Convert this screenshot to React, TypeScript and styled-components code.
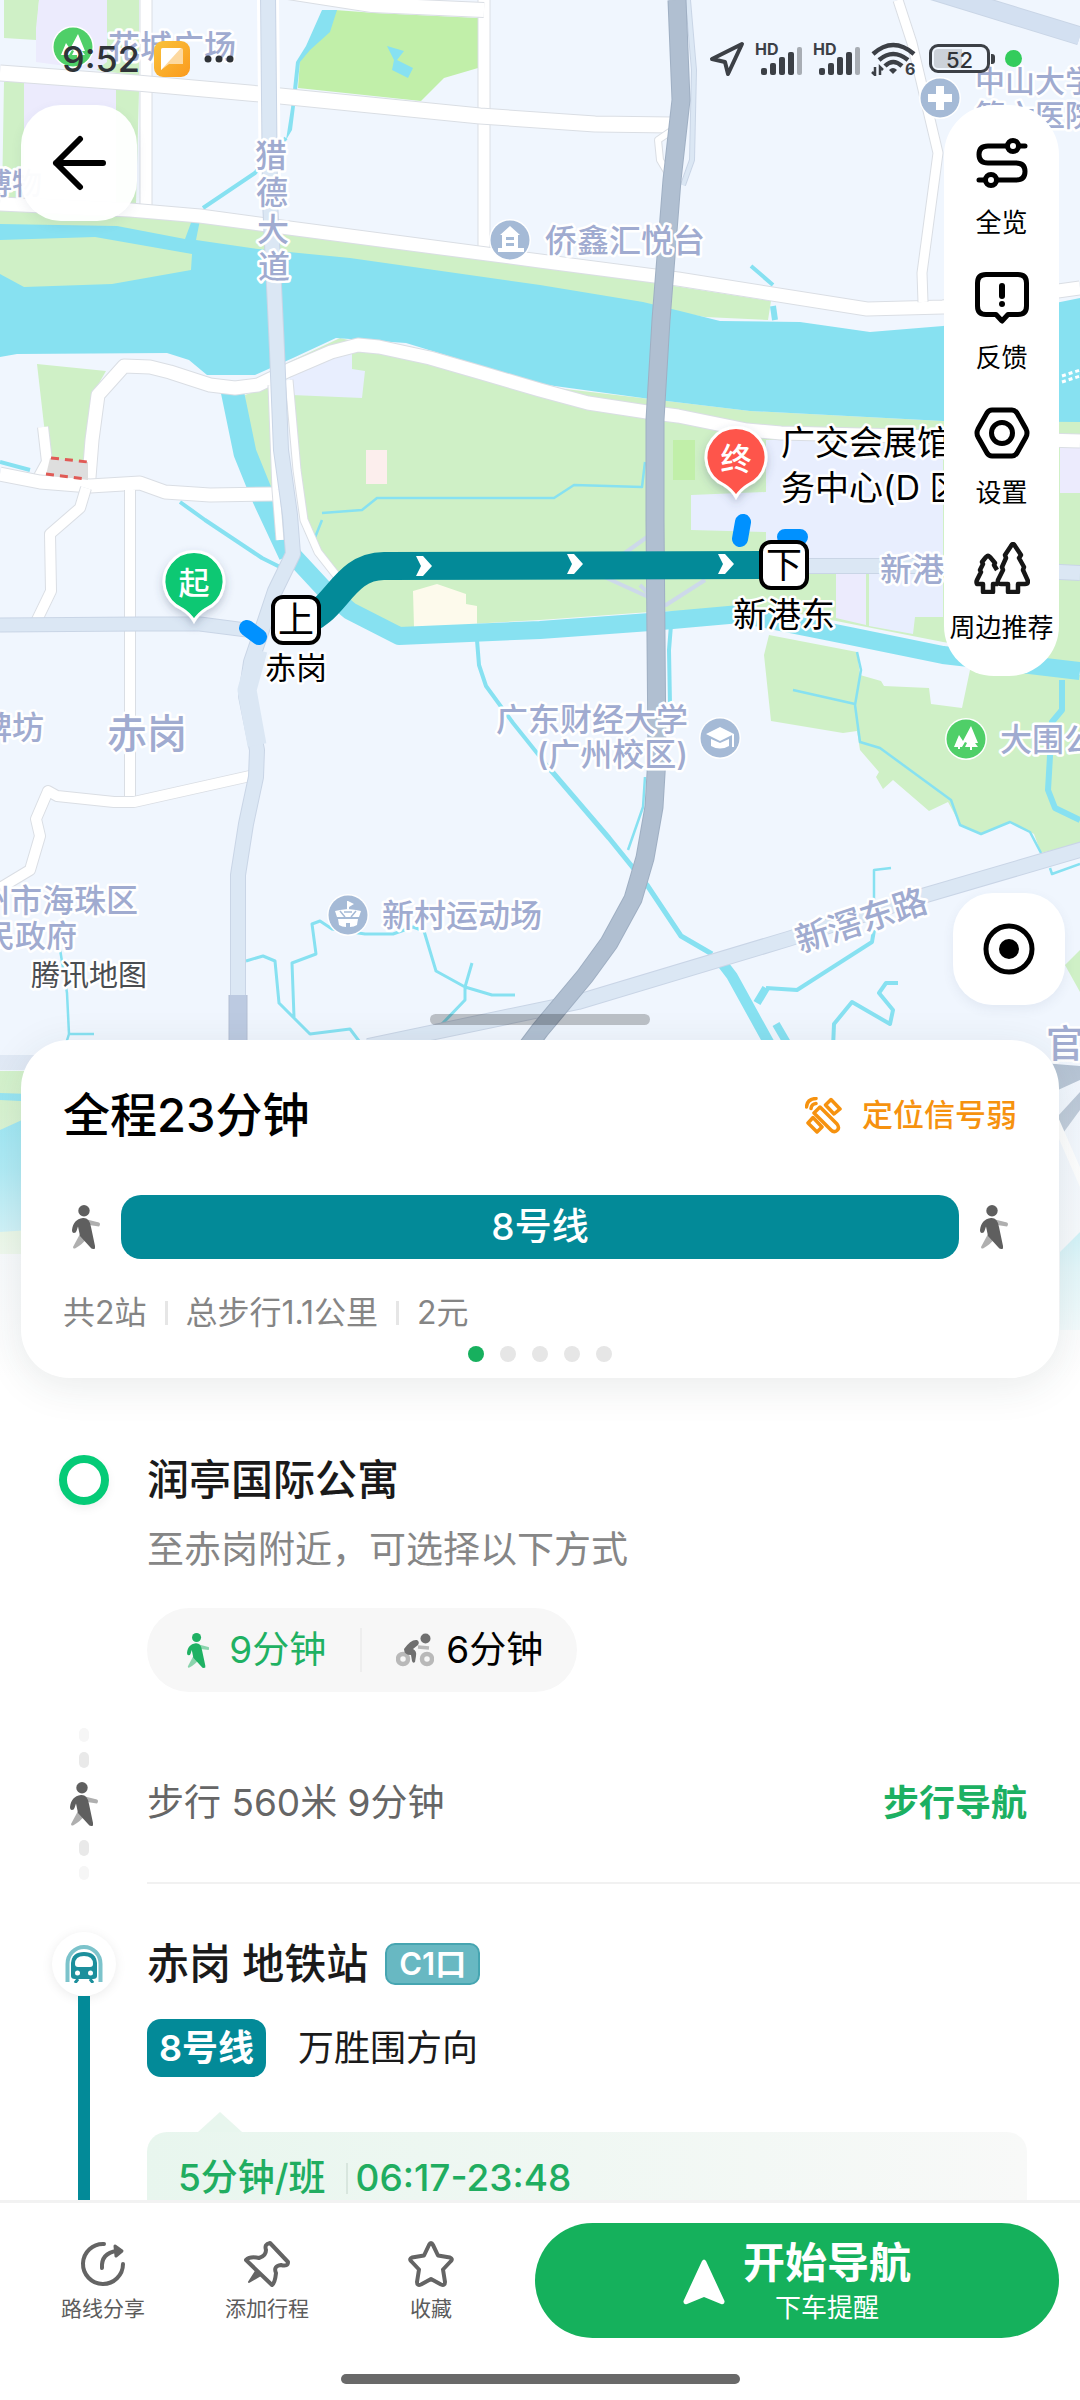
import React from "react";
import styled, { createGlobalStyle } from "styled-components";

const c = {
  land: "#f0f6fe",
  park: "#cff0c6",
  lawn: "#c1efa9",
  water: "#87e1f1",
  lilac: "#e8eefe",
  violet: "#ecebfd",
  avenue: "#dbe7f4",
  avenueEdge: "#c9d5e6",
  highway: "#b0bfd1",
  label: "#a0abd0",
  line: "#038a98",
  green: "#15b15c",
  ink: "#1a1a1a",
};

const Global = createGlobalStyle`
  *, *::before, *::after { box-sizing: border-box; }
  body {
    margin: 0;
    background: #fff;
    color: ${c.ink};
    font-family: Inter, "Noto Sans CJK SC", sans-serif;
  }
  button { font: inherit; color: inherit; border: 0; padding: 0; background: none; cursor: pointer; }
  h1, h2, p, ul, ol { margin: 0; padding: 0; font-weight: inherit; }
  ul, ol { list-style: none; }
  svg { display: block; flex: none; }
`;

const Screen = styled.div`
  height: 100vh;
  display: flex;
  flex-direction: column;
  overflow: hidden;
`;

const Content = styled.main`
  flex: 1;
  min-height: 0;
  display: flex;
  flex-direction: column;
  overflow-y: auto;
  scrollbar-width: none;
`;

/* ---------- map stage ---------- */

const Stage = styled.section`
  position: relative;
  flex: none;
  display: flex;
  flex-direction: column;
  padding-bottom: 30px;
`;

const MapCanvas = styled.svg`
  position: absolute;
  inset: 0;
  width: 100%;
  height: 100%;
`;

const Fade = styled.div`
  position: absolute;
  inset: auto 0 0;
  height: 370px;
  background: linear-gradient(
    rgba(255, 255, 255, 0) 0,
    rgba(250, 251, 251, 0.35) 35%,
    rgba(250, 251, 251, 0.8) 62%,
    #fff 92%
  );
`;

const MapLabel = styled.text<{ $size?: number; $tone?: string }>`
  font-size: ${(p) => p.$size ?? 32}px;
  font-weight: ${(p) => (p.$tone ? 400 : 500)};
  fill: ${(p) => p.$tone ?? c.label};
  stroke: #fff;
  stroke-width: 5px;
  stroke-linejoin: round;
  paint-order: stroke;
  dominant-baseline: central;
`;

const PinText = styled.text`
  font-size: 31px;
  font-weight: 500;
  fill: #fff;
  text-anchor: middle;
  dominant-baseline: central;
`;

const StopText = styled.text`
  font-size: 36px;
  fill: #000;
  text-anchor: middle;
  dominant-baseline: central;
`;

const StatusBar = styled.header`
  position: relative;
  height: 105px;
  padding: 12px 58px 0 62px;
  display: flex;
  align-items: center;
  justify-content: space-between;
  color: #2f3338;
`;

const StatusGroup = styled.div<{ $gap: number }>`
  display: flex;
  align-items: center;
  gap: ${(p) => p.$gap}px;
`;

const Clock = styled.time`
  font-size: 36px;
  line-height: 36px;
  font-weight: 500;
`;

const Battery = styled.span`
  width: 61px;
  height: 29px;
  margin-left: 3px;
  border: 3px solid #3c4046;
  border-radius: 9px;
  display: grid;
  place-items: center;
  font-size: 22px;
  line-height: 22px;
  font-weight: 500;
  background: linear-gradient(90deg, rgba(60, 64, 70, 0.2) 55%, transparent 55%);
  background-clip: content-box;
  padding: 2px;
`;

const BatteryNub = styled.span`
  width: 4px;
  height: 10px;
  margin-left: -6px;
  border-radius: 0 3px 3px 0;
  background: #3c4046;
`;

const LiveDot = styled.span`
  width: 17px;
  height: 17px;
  border-radius: 50%;
  background: #33cc5c;
`;

const Controls = styled.div`
  position: relative;
  display: flex;
  justify-content: space-between;
  align-items: flex-start;
  padding: 0 15px 0 21px;
`;

const FloatButton = styled.button<{ $size: number }>`
  width: ${(p) => p.$size}px;
  height: ${(p) => p.$size}px;
  border-radius: 40px;
  display: grid;
  place-items: center;
  background: rgba(255, 255, 255, 0.96);
  box-shadow: 0 4px 12px rgba(60, 80, 110, 0.08);
`;

const SideColumn = styled.div`
  display: flex;
  flex-direction: column;
  align-items: flex-end;
  gap: 217px;
`;

const ToolPanel = styled.nav`
  width: 115px;
  margin-right: 6px;
  padding: 32px 0 33px;
  display: flex;
  flex-direction: column;
  gap: 34px;
  border-radius: 50px;
  background: #fff;
`;

const Tool = styled.button`
  display: flex;
  flex-direction: column;
  align-items: center;
  gap: 19px;
  font-size: 26px;
  line-height: 30px;
  color: #000;
  white-space: nowrap;
`;

const DragHandle = styled.div`
  position: relative;
  width: 220px;
  height: 11px;
  margin: 9px auto 15px;
  border-radius: 6px;
  background: rgba(0, 0, 0, 0.22);
`;

/* ---------- summary card ---------- */

const Card = styled.article`
  position: relative;
  margin: 0 21px;
  padding: 45px 42px 16px;
  border-radius: 48px;
  background: #fff;
  box-shadow: 0 8px 40px rgba(40, 60, 60, 0.1);
`;

const CardHead = styled.div`
  display: flex;
  align-items: center;
  justify-content: space-between;
`;

const Total = styled.h1`
  font-size: 47px;
  line-height: 60px;
  font-weight: 500;
  color: #000;
`;

const Signal = styled.p`
  display: flex;
  align-items: center;
  gap: 20px;
  font-size: 31px;
  line-height: 40px;
  font-weight: 500;
  color: #f6920f;
`;

const RouteBar = styled.div`
  display: flex;
  align-items: center;
  gap: 12px;
  margin: 50px 0 34px;
`;

const WalkSlot = styled.span`
  width: 46px;
  display: flex;
  justify-content: center;
`;

const LineBar = styled.div`
  flex: 1;
  border-radius: 20px;
  background: ${c.line};
  color: #fff;
  font-size: 37px;
  line-height: 64px;
  font-weight: 500;
  text-align: center;
`;

const Facts = styled.ul`
  display: flex;
  align-items: center;
  font-size: 32px;
  line-height: 40px;
  color: #858585;
`;

const Fact = styled.li`
  display: flex;
  align-items: center;
  & + &::before {
    content: "";
    width: 3px;
    height: 24px;
    margin: 0 18px;
    background: #e6e6e6;
  }
`;

const Pager = styled.div`
  display: flex;
  justify-content: center;
  gap: 16px;
  margin-top: 13px;
`;

const PageDot = styled.button<{ $active?: boolean }>`
  width: 16px;
  height: 16px;
  border-radius: 50%;
  background: ${(p) => (p.$active ? "#17b05e" : "#e6e6e6")};
`;

/* ---------- steps ---------- */

const Steps = styled.ol`
  flex: 1;
  display: flex;
  flex-direction: column;
`;

const Step = styled.li`
  display: grid;
  grid-template-columns: 147px minmax(0, 1fr);
`;

const Gutter = styled.div<{ $top?: number; $gap?: number; $center?: boolean }>`
  display: flex;
  flex-direction: column;
  align-items: center;
  justify-content: ${(p) => (p.$center ? "center" : "flex-start")};
  gap: ${(p) => p.$gap ?? 0}px;
  padding: ${(p) => p.$top ?? 0}px 0 0 21px;
`;

const StartBody = styled.div`
  padding: 44px 53px 32px 0;
`;

const PlaceName = styled.h2`
  font-size: 42px;
  line-height: 56px;
  font-weight: 500;
  color: ${c.ink};
`;

const Hint = styled.p`
  margin: 17px 0 33px;
  font-size: 37px;
  line-height: 50px;
  color: #868686;
`;

const StartRing = styled.span`
  width: 50px;
  height: 50px;
  border: 8px solid #05cb77;
  border-radius: 50%;
  box-shadow: 0 4px 10px rgba(0, 0, 0, 0.06);
`;

const ModeSwitch = styled.div`
  width: fit-content;
  height: 84px;
  padding: 0 34px 0 40px;
  display: flex;
  align-items: center;
  border-radius: 42px;
  background: #f7f7f7;
`;

const Mode = styled.button<{ $active?: boolean }>`
  display: flex;
  align-items: center;
  gap: ${(p) => (p.$active ? 20 : 12)}px;
  font-size: 37px;
  line-height: 50px;
  color: ${(p) => (p.$active ? "#1fb163" : "#000")};
`;

const ModeDivider = styled.span`
  width: 2px;
  height: 44px;
  margin: 0 34px;
  background: #eeeeee;
`;

const Bead = styled.span<{ $faint?: boolean }>`
  width: 10px;
  height: ${(p) => (p.$faint ? 14 : 16)}px;
  border-radius: 5px;
  background: ${(p) => (p.$faint ? "#f6f6f6" : "#e9e9e9")};
`;

const BeadPair = styled.span`
  display: flex;
  flex-direction: column;
  gap: 10px;
`;

const WalkBody = styled.div`
  height: 160px;
  padding-right: 53px;
  display: flex;
  align-items: center;
  justify-content: space-between;
  border-bottom: 2px solid #f1f1f1;
  font-size: 37px;
  line-height: 50px;
  color: #666;
`;

const WalkLink = styled.a`
  font-weight: 600;
  font-size: 36px;
  color: #1cb062;
  text-decoration: none;
`;

const StationDisc = styled.span`
  width: 64px;
  height: 64px;
  flex: none;
  display: grid;
  place-items: center;
  border-radius: 50%;
  background: #fff;
  box-shadow: 0 2px 12px rgba(0, 0, 0, 0.08);
`;

const LineTrack = styled.span`
  flex: 1;
  width: 12px;
  background: ${c.line};
`;

const StationBody = styled.div`
  padding: 52px 53px 0 0;
`;

const StationHead = styled.div`
  display: flex;
  align-items: center;
  gap: 17px;
`;

const ExitTag = styled.span`
  height: 42px;
  padding: 0 12px;
  border: 2px solid #46a5b1;
  border-radius: 10px;
  background: #68b8c2;
  color: #fff;
  font-size: 31px;
  line-height: 38px;
  font-weight: 600;
`;

const Direction = styled.div`
  display: flex;
  align-items: center;
  gap: 32px;
  margin: 27px 0 55px;
  font-size: 36px;
  line-height: 58px;
`;

const LineTag = styled.span`
  padding: 0 12px;
  border-radius: 14px;
  background: ${c.line};
  color: #fff;
  font-weight: 600;
`;

const Timetable = styled.div`
  position: relative;
  padding: 22px 31px 40px;
  display: flex;
  align-items: center;
  border-radius: 20px 20px 0 0;
  background: linear-gradient(90deg, #e8f6ee, #f8f9f8);
  color: #20ad60;
  font-size: 37px;
  line-height: 48px;
  font-weight: 500;
  &::before {
    content: "";
    position: absolute;
    left: 51px;
    bottom: 100%;
    border: solid transparent;
    border-width: 0 22px 20px;
    border-bottom-color: #e8f6ee;
  }
`;

const TimeDivider = styled.span`
  width: 2px;
  height: 31px;
  margin: 0 8px 0 20px;
  background: #d8e6de;
`;

/* ---------- footer ---------- */

const Footer = styled.footer`
  flex: none;
  padding: 20px 21px 16px;
  border-top: 3px solid #f2f2f2;
  background: #fff;
`;

const FooterRow = styled.div`
  display: grid;
  grid-template-columns: 164fr 164fr 164fr 546fr;
  align-items: center;
`;

const Action = styled.button`
  display: flex;
  flex-direction: column;
  align-items: center;
  gap: 8px;
  padding-top: 3px;
  font-size: 21px;
  line-height: 28px;
  color: #5c5c5c;
`;

const StartButton = styled.button`
  height: 115px;
  margin-left: 22px;
  padding-top: 3px;
  display: flex;
  align-items: center;
  justify-content: center;
  gap: 18px;
  border-radius: 58px;
  background: ${c.green};
  color: #fff;
`;

const StartText = styled.span`
  display: flex;
  flex-direction: column;
  align-items: center;
  gap: 4px;
`;

const StartMain = styled.span`
  font-size: 42px;
  line-height: 48px;
  font-weight: 600;
`;

const StartSub = styled.span`
  font-size: 26px;
  line-height: 34px;
`;

const HomeBar = styled.div`
  width: 399px;
  height: 10px;
  margin: 36px auto 0;
  border-radius: 5px;
  background: #696969;
`;

/* ---------- drawings ---------- */

const Walker = ({ tone = "#5f5f5f", height = 44 }: { tone?: string; height?: number }) => (
  <svg height={height} viewBox="0 0 28 44" fill={tone} aria-hidden="true">
    <path opacity=".5" d="M15 14.5L27 17.5Q29 19 27 21.5L17 20Z" />
    <path opacity=".5" d="M8 29L1 42Q1 44 3 43.500Q11 39 15 33Z" />
    <circle cx="12" cy="5.700" r="5.700" />
    <path d="M11 13C4 14 1 18 0 25Q0 28 2 28Q4 28 4.500 26L6 21.500L8 31L18 42Q20 45 23 43.500L23 41L19 22Q17.500 12.500 11 13Z" />
  </svg>
);

const Cyclist = () => (
  <svg width="38" height="34" viewBox="0 0 38 34" aria-hidden="true">
    <g fill="none" stroke="#b9b9b9" strokeWidth="4.500">
      <circle cx="7" cy="26" r="5" />
      <circle cx="31" cy="26" r="5" />
      <path d="M22 14L33 15" strokeWidth="3.500" />
    </g>
    <circle cx="29.500" cy="5.500" r="5" fill="#6f6f6f" />
    <path fill="#6f6f6f" d="M8 16Q15 6 21 7Q24 9 22 12L17 16Q21 18 20 23L19 29Q17 31 16 28L15 22Q8 22 8 16Z" />
  </svg>
);

const Satellite = () => (
  <svg width="37" height="37" viewBox="0 0 37 37" fill="none" stroke="#f6920f" strokeWidth="3.500" strokeLinejoin="round" aria-hidden="true">
    <path d="M1.500 10Q2 2 11 1.500M6 11.500Q6.500 7 11 6.500" strokeLinecap="round" />
    <path d="M15 9L32 26Q35 30 32 32.500Q29 35 26 32L9 15Z" transform="translate(0 1)" />
    <path d="M26 2.500L35 12L29 17L20.500 8Z" />
    <path d="M8 20.500L17 30L12 35L3 26Z" />
  </svg>
);

const BackArrow = () => (
  <svg width="56" height="56" viewBox="0 0 56 56" fill="none" stroke="#000" strokeWidth="6" strokeLinecap="round" strokeLinejoin="round" aria-hidden="true">
    <path d="M29 4L5 28L29 52M5 28H52" />
  </svg>
);

const OverviewIcon = () => (
  <svg width="52" height="52" viewBox="0 0 52 52" fill="none" stroke="#000" strokeWidth="5" strokeLinecap="round" aria-hidden="true">
    <path d="M49 9H43M31 9H12Q3 9 3 17.500T12 26H40Q49 26 49 34.500T40 43H22M9 43H3" />
    <circle cx="37" cy="9" r="5.500" />
    <circle cx="15" cy="43" r="5.500" />
  </svg>
);

const FeedbackIcon = () => (
  <svg width="54" height="52" viewBox="0 0 54 52" fill="none" stroke="#000" strokeWidth="5" strokeLinejoin="round" aria-hidden="true">
    <path d="M11 2.500H43Q51.500 2.500 51.500 11V34Q51.500 42.500 43 42.500H33L27 49L21 42.500H11Q2.500 42.500 2.500 34V11Q2.500 2.500 11 2.500Z" />
    <path d="M27 14V24" strokeWidth="6" strokeLinecap="round" />
    <circle cx="27" cy="32" r="3" fill="#000" stroke="none" />
  </svg>
);

const SettingsIcon = () => (
  <svg width="56" height="52" viewBox="0 0 56 52" fill="none" stroke="#000" strokeWidth="5" strokeLinejoin="round" aria-hidden="true">
    <path d="M18 3H38Q41 3 43 6L52 22Q54 26 52 30L43 46Q41 49 38 49H18Q15 49 13 46L4 30Q2 26 4 22L13 6Q15 3 18 3Z" />
    <circle cx="28" cy="26" r="10.500" />
  </svg>
);

const TreesIcon = () => (
  <svg width="56" height="52" viewBox="0 0 56 52" fill="none" stroke="#161616" strokeWidth="4.500" strokeLinejoin="round" aria-hidden="true">
    <path d="M24 42H19V50H9V42H3Q2 40 3 38L7 30L6 28L9 22L8 20L12 15Q14 13 16 15L21 21L20 23L23 28" />
    <path d="M39 2Q40 2 41 4L47 13L45 16L50 25L49 28L54 39Q54 42 51 42H44V50H34V42H27Q23 42 24 38L29 28L28 25L32 16L31 13L37 4Q38 2 39 2Z" />
  </svg>
);

const LocateIcon = () => (
  <svg width="52" height="52" viewBox="0 0 52 52" aria-hidden="true">
    <circle cx="26" cy="26" r="23" fill="none" stroke="#000" strokeWidth="5" />
    <circle cx="26" cy="26" r="10" />
  </svg>
);

const TrainIcon = () => (
  <svg width="38" height="38" viewBox="0 0 38 38" aria-hidden="true">
    <path d="M2.500 37V19A16.500 17 0 0 1 35.500 19V37" fill="none" stroke="#7cc3cb" strokeWidth="4" />
    <path d="M6 18Q7 7 19 7T32 18V31Q32 34 28 34H10Q6 34 6 31Z" fill="#1c8f9c" />
    <path d="M10 19Q10 11 19 11T28 19Q28 22 25 22H13Q10 22 10 19Z" fill="#fff" />
    <circle cx="12.500" cy="28" r="2.500" fill="#fff" />
    <circle cx="25.500" cy="28" r="2.500" fill="#fff" />
    <path d="M10 38L13 34M28 38L25 34" stroke="#1c8f9c" strokeWidth="3" />
  </svg>
);

const ShareIcon = () => (
  <svg width="46" height="46" viewBox="0 0 46 46" fill="none" stroke="#646464" strokeWidth="4" strokeLinecap="round" strokeLinejoin="round" aria-hidden="true">
    <path d="M24 3A20 20 0 1 0 43 23" />
    <path d="M22 27Q21 12 37 10" />
    <path d="M35 5L42 10L36 15Z" fill="#646464" strokeWidth="3" />
  </svg>
);

const PushpinIcon = () => (
  <svg width="46" height="46" viewBox="0 0 46 46" fill="none" stroke="#646464" strokeWidth="4" strokeLinejoin="round" aria-hidden="true">
    <path d="M26 2Q20 3 22 9Q22 15 15 17Q6 15 2 19L28 44Q31 42 32 32Q29 25 37 24Q44 26 44 21Z" />
    <path d="M12 30L5 41L17 34Z" fill="#646464" strokeWidth="2" />
  </svg>
);

const StarIcon = () => (
  <svg width="46" height="46" viewBox="0 0 46 46" fill="none" stroke="#646464" strokeWidth="4" strokeLinejoin="round" aria-hidden="true">
    <path d="M21 4Q23 0 25 4L30 14.500L42 16.500Q45 18 43 20L35 28.500L37 41Q37 45 33 43.500L23 38L13 43.500Q9 45 9 41L11 28.500L3 20Q1 18 4 16.500L16 14.500Z" />
  </svg>
);

const GoArrow = () => (
  <svg width="42" height="46" viewBox="0 0 42 46" fill="#fff" aria-hidden="true">
    <path d="M19 2Q21 -1 23 2L41.500 42Q42 46 38 45L21 38L4 45Q0 46 .500 42Z" />
  </svg>
);

const Cellular = () => (
  <svg width="48" height="33" viewBox="0 0 48 33" fill="#3c4046" aria-hidden="true">
    <text x="0" y="13" fontSize="16" fontWeight="700">HD</text>
    <rect x="6" y="26" width="6" height="7" rx="2" />
    <rect x="15" y="21" width="6" height="12" rx="2" />
    <rect x="24" y="15" width="6" height="18" rx="2" />
    <rect x="33" y="10" width="6" height="23" rx="2" />
    <rect x="42" y="5" width="5" height="28" rx="2" opacity=".4" />
  </svg>
);

const Wifi = () => (
  <svg width="45" height="34" viewBox="0 0 45 34" fill="none" stroke="#3c4046" strokeWidth="4.500" aria-hidden="true">
    <path d="M2 12Q22 -6 43 12M8 18Q22 6 37 18M14 24Q22 16 31 24" />
    <path d="M18 28Q22 24 26 28L22 32Z" fill="#3c4046" stroke="none" />
    <path d="M4 25V33L1 30M9 33V25L12 28" strokeWidth="2.500" />
    <text x="34" y="33" fontSize="16" fontWeight="700" fill="#3c4046" stroke="none">6</text>
  </svg>
);

const NavArrow = () => (
  <svg width="36" height="36" viewBox="0 0 36 36" fill="none" stroke="#3c4046" strokeWidth="4" strokeLinejoin="round" aria-hidden="true">
    <path d="M33 3L3 18L16 21L19 33Z" />
  </svg>
);

const AppBadge = () => (
  <svg width="36" height="36" viewBox="0 0 36 36" aria-hidden="true">
    <defs>
      <linearGradient id="badge" x1="0" y1="0" x2="1" y2="1">
        <stop offset="0" stopColor="#f9c33c" />
        <stop offset="1" stopColor="#fb9a1d" />
      </linearGradient>
    </defs>
    <rect width="36" height="36" rx="9" fill="url(#badge)" />
    <path d="M7 9Q7 7 9 7H27Q29 7 29 9V23H15L7 29Z" fill="#fdd9a0" />
    <path d="M7 9Q7 7 9 7H27L7 29Z" fill="#fff" />
  </svg>
);

const MoreDots = () => (
  <svg width="30" height="8" viewBox="0 0 30 8" fill="#2f3338" aria-hidden="true">
    <circle cx="4" cy="4" r="3.500" />
    <circle cx="15" cy="4" r="3.500" />
    <circle cx="26" cy="4" r="3.500" />
  </svg>
);

/* ---------- map drawing ---------- */

const Street = ({ d, width = 13 }: { d: string; width?: number }) => (
  <>
    <path d={d} stroke="#dadee4" strokeWidth={width + 2} />
    <path d={d} stroke="#fff" strokeWidth={width} />
  </>
);

const Avenue = ({ d, width = 14, tone = c.avenue, edge = c.avenueEdge }: { d: string; width?: number; tone?: string; edge?: string }) => (
  <>
    <path d={d} stroke={edge} strokeWidth={width + 2} />
    <path d={d} stroke={tone} strokeWidth={width} />
  </>
);

const Poi = ({ x, y, park, children }: { x: number; y: number; park?: boolean; children: React.ReactNode }) => (
  <g transform={`translate(${x} ${y})`}>
    <circle r="21" fill="#fff" />
    <circle r="19.500" fill={park ? "#4fcf68" : "#a5bad6"} />
    {children}
  </g>
);

const TreesGlyph = () => (
  <path fill="#fff" d="M5 -13L12 4L9 4L12 8H6V11H4V8H-1L1 4L-1 3L-4 8H-6V10H-8V8H-12L-7 -4L-3 2Z" />
);

const Pin = ({ x, y, tone, text }: { x: number; y: number; tone: string; text: string }) => (
  <g transform={`translate(${x} ${y})`}>
    <path
      d="M0 39Q-4 32 -12 27A30 30 0 1 1 12 27Q4 32 0 39Z"
      fill={tone}
      stroke="#fff"
      strokeWidth="3"
      filter="url(#pinShadow)"
    />
    <PinText>{text}</PinText>
  </g>
);

const Stop = ({ x, y, text }: { x: number; y: number; text: string }) => (
  <g transform={`translate(${x} ${y})`}>
    <rect x="-23" y="-23" width="46" height="46" rx="10" fill="#fff" stroke="#000" strokeWidth="4" />
    <StopText>{text}</StopText>
  </g>
);

const CityMap = () => (
  <MapCanvas viewBox="0 0 1080 1408" preserveAspectRatio="xMidYMin slice" role="img" aria-label="路线地图">
    <defs>
      <filter id="pinShadow" x="-30%" y="-30%" width="160%" height="170%">
        <feDropShadow dx="0" dy="4" stdDeviation="4" floodColor="#405070" floodOpacity=".3" />
      </filter>
    </defs>
    <rect width="1080" height="1408" fill={c.land} />

    <g fill={c.park}>
      <path d="M4 0H39L36 40L4 38ZM107 0H139V76L96 70L107 58ZM4 82L24 80V160L22 200H2ZM116 88L139 91L136 203H116Z" />
      <path d="M0 206L117 213L265 226L400 243L540 266L655 283L771 301L768 320L705 317L540 287L258 250L0 228Z" />
      <path d="M37 364L106 371L95 390L85 470L52 470L44 425Z" />
      <path d="M245 395L268 387L274 490L259 490L248 455Z" />
      <path d="M289 362L340 338L540 386L650 399L750 411L943 421H1080V664L943 642L770 608L650 612L540 620L399 628L351 603L306 535L292 396Z" />
      <path d="M769 635L857 652L860 675L881 681L884 686L929 688L931 704L962 708L970 670L1080 675V843L1041 853L1034 834L1010 822L981 834L960 824L948 802L929 811L893 780L883 789L876 777L879 772L860 750L857 731L843 733L771 721L764 655Z" />
      <path d="M1065 965L1080 950V992Z" />
    </g>
    <path fill={c.lawn} d="M335 10L375 13L478 18V68L444 78L421 101L298 88L300 60ZM673 440H695V480H673Z" />
    <path fill={c.violet} d="M39 0H107V62L96 70L36 62L36 28ZM24 82L116 90V150H24ZM836 574H866V625L836 618ZM1060 446H1080V493H1060Z" />
    <path fill={c.lilac} d="M289 370L352 352V369L365 371L362 398L292 395ZM766 440H943V560H766V532L691 530V495L766 492ZM869 574H943V617H915L913 634L869 626Z" />
    <rect x="366" y="450" width="21" height="34" fill="#fceeed" />
    <path fill="#fdfaec" d="M413 591L437 584L466 594V604L477 606V625L414 627Z" />

    <g fill={c.water}>
      <path d="M0 224L117 226L185 239L192 220H200L196 240L258 249L350 258L540 285L643 302L680 311L720 321L800 322L870 332L943 326L1080 298V422L943 421L750 411L650 399L540 384L406 343L336 338L293 358L255 375L207 375L189 360L167 353L17 354L0 357Z" />
      <path d="M387 46L404 51L397 60L413 68L408 78L392 70L394 60Z" />
      <path d="M322 10H337L330 32L310 50L300 62L297 90L292 130L286 140L291 108L296 62L306 46Z" />
    </g>
    <path fill={c.park} d="M0 240L95 237L192 254L191 270L112 284L24 287L0 274Z" />

    <g fill="none" stroke={c.water} strokeLinejoin="round">
      <path strokeWidth="23" d="M232 390L245 453L262 495L290 555" />
      <path strokeWidth="18" d="M286 548L325 590L350 611L399 636L540 630L650 622L740 614L850 636L943 655L1080 671" />
      <path strokeWidth="4" d="M286 138L255 173L203 208M180 502L205 520L262 558L290 572M751 266L773 285M0 462L30 470" />
      <path strokeWidth="6" d="M773 306L775 320" />
      <path strokeWidth="4" d="M477 640L479 665L486 686L513 723L549 768M671 625L669 650L670 705" />
      <path strokeWidth="2.500" d="M645 777L643 807L628 850M322 513L362 510L377 498H554L574 485L642 487L645 462M322 520L312 545" />
      <path strokeWidth="5" d="M549 768L609 838L647 885L681 936L712 954" />
      <path strokeWidth="11" d="M716 955L732 976L770 1045" />
      <path strokeWidth="8" d="M776 1024L790 1048M757 1003L766 988" />
      <path strokeWidth="4" d="M766 988L797 990L872 942L874 930M833 1048L834 1024L852 1002L890 1024L893 1010L879 993L886 983H898" />
      <path strokeWidth="2.500" d="M874 900V870L891 868M857 652L861 670L855 705L860 742L880 748L951 800L960 825L981 834L1010 822L1030 832L1041 853M793 690L855 704M1050 868L1052 874L1080 864" />
      <path strokeWidth="6" d="M1062 680V710L1052 722L1048 790L1055 808L1080 820" />
      <path strokeWidth="3" d="M246 961L263 956L275 961L279 1003L296 1020L310 1034L350 1029L362 1045M294 1017L292 963L316 954L312 924L320 921L332 929L365 934H393L413 927L424 931L436 971L465 987L492 995H515M472 963L465 987V1000L442 1024" />
      <path strokeWidth="2.500" d="M60 949L67 993L69 1034L64 1050M69 1034H94" />
    </g>

    <g fill="none" strokeLinejoin="round">
      <Street d="M146 0V210M484 0V255" width={11} />
      <Street d="M262 -12L372 5L484 10" width={14} />
      <Street d="M0 73L137 83L260 94L480 116L595 124L672 125" width={15} />
      <Street d="M0 204L130 210L200 216L289 228L540 261L678 279L867 309L943 307L1080 288" />
      <Street d="M898 0L912 43L938 153L922 273L923 302" width={9} />
      <Street d="M680 125L658 140L660 160L672 180" width={6} />
      <Street d="M88 490L92 440L98 395L124 366L150 367L170 372L210 385L235 388L258 385L289 370L331 352L358 345L379 347L430 358L482 373L540 390L588 403L647 412L678 416L747 430L781 433L943 437L1080 441" />
      <Street d="M43 427L47 462L36 482" width={10} />
      <Street d="M0 474L40 482L90 486L140 483L165 492L210 495L275 494" />
      <Street d="M86 488L80 508L50 534L51 591L36 622M130 490V804" width={10} />
      <Street d="M250 776L134 802L114 802L57 796L48 791L36 819L40 836L30 870L0 888" width={10} />
      <Street d="M272 385L276 490L280 540M289 380L297 470L304 520L318 552L340 580" width={7} />
      <path stroke="#fff" strokeWidth="22" d="M268 0L270 200" />
      <Avenue d="M0 625L140 624L200 624L262 632" width={13} />
      <Avenue d="M268 -5L270 200L277 350L281 450L290 515L293 554L275 591L265 621L251 662L246 696L257 750L256 777L246 824L238 875V1045" />
      <path stroke={c.avenue} strokeWidth="19" d="M258 650L247 690L257 745" />
      <Avenue d="M238 995V1050" width={17} tone="#bccae1" edge="#b3bed2" />
      <Avenue d="M930 -10L1080 36" width={17} tone="#d3e0f1" />
      <Avenue d="M800 566H943L1080 573" />
      <Avenue d="M1090 847L919 897L788 939L578 1002L368 1046" />
      <Avenue d="M688 0L694 70L692 160L683 185" width={4} />
      <path stroke="#cdd9ea" strokeWidth="4" d="M600 575L666 605L705 580M622 555L650 535M640 585L655 600" />
      <Avenue d="M677 0L681 100L672 180L661 320L655 420L655 520L657 757L654 807L645 858L633 899L609 943L585 976L540 1030L525 1050" width={17} tone={c.highway} edge="#9fafc3" />
      <path stroke="#fff" strokeWidth="3" strokeDasharray="4 3" d="M1062 382L1080 376M1062 376L1080 370" />
    </g>
    <path fill="#dedede" d="M50 458L88 462V480L46 475Z" />
    <path stroke="#e05a55" strokeWidth="3" strokeDasharray="8 6" d="M51 458L88 462M46 474L86 479" />

    {/* edges showing beside the card */}
    <path fill="#dfe8f5" d="M0 1055H60V1070H0Z" />
    <path fill={c.park} d="M0 1071H60V1254H0Z" />
    <path fill={c.water} d="M0 1093L60 1095V1103L0 1100ZM0 1130L22 1120H60V1228L0 1232ZM1060 1252L1080 1232V1330H1060Z" />
    <path fill={c.highway} d="M1030 1062L1080 1066V1080L1058 1090L1030 1080ZM1058 1116L1080 1092V1110L1058 1140Z" />
    <path stroke="#fff" strokeWidth="8" d="M1055 1120L1090 1200" />

    {/* route */}
    <g fill="none">
      <path stroke="#0091ff" strokeWidth="16" strokeLinecap="round" d="M247 628L259 637M743 522L740 539M785 537H800" />
      <path stroke={c.line} strokeWidth="28" d="M300 622C336 614 342 566 384 566L784 565" />
    </g>
    <path fill="#fff" d="M416 556H423L432 566L423 576H416L421 566ZM567 554H574L583 564L574 574H567L572 564ZM718 554H725L734 564L725 574H718L723 564Z" />
    <Stop x={296} y={620} text="上" />
    <Stop x={784} y={565} text="下" />
    <MapLabel x="296" y="667" textAnchor="middle" $size={31} $tone="#000">赤岗</MapLabel>
    <MapLabel x="784" y="614" textAnchor="middle" $size={34} $tone="#000">新港东</MapLabel>

    {/* place names */}
    <Poi x={73} y={47} park><TreesGlyph /></Poi>
    <MapLabel x="108" y="46">花城广场</MapLabel>
    <Poi x={510} y={240}>
      <path fill="#fff" d="M0 -14L10 -5H8V8H14V12H-12V8H-8V-5H-10ZM-4 -3V0H4V-3ZM-4 3V6H4V3Z" fillRule="evenodd" />
    </Poi>
    <MapLabel x="545" y="240">侨鑫汇悦台</MapLabel>
    {["猎", "德", "大", "道"].map((ch, i) => (
      <MapLabel key={ch} x={271 + i} y={155 + i * 37} textAnchor="middle">{ch}</MapLabel>
    ))}
    <Poi x={940} y={98}>
      <path fill="#fff" d="M-4 -12H4V-4H12V4H4V12H-4V4H-12V-4H-4Z" />
    </Poi>
    <MapLabel x="975" y="81" $size={30}>中山大学</MapLabel>
    <MapLabel x="975" y="115" $size={30}>第六医院</MapLabel>
    <MapLabel x="-18" y="183" $size={30}>博物</MapLabel>
    <MapLabel x="781" y="442" $size={34} $tone="#000">广交会展馆</MapLabel>
    <MapLabel x="781" y="487" $size={34} $tone="#000">务中心(D 区)</MapLabel>
    <MapLabel x="880" y="569">新港东路</MapLabel>
    <MapLabel x="-20" y="727">碑坊</MapLabel>
    <MapLabel x="107" y="733" $size={40}>赤岗</MapLabel>
    <MapLabel x="688" y="719" textAnchor="end">广东财经大学</MapLabel>
    <MapLabel x="688" y="754" textAnchor="end">(广州校区)</MapLabel>
    <Poi x={720} y={738}>
      <path fill="#fff" d="M0 -11L14 -4L0 3L-14 -4ZM-9 1L0 5L9 1V8Q0 13 -9 8ZM12 -4H14V9H12Z" />
    </Poi>
    <Poi x={966} y={739} park><TreesGlyph /></Poi>
    <MapLabel x="1000" y="739">大围公园</MapLabel>
    <Poi x={348} y={915}>
      <path fill="#fff" d="M0 -14L6 -11L1 -8V-6H-1V-14ZM-13 -4L-8 -5L0 -6L8 -5L13 -4L11 2L-11 2ZM-10 4H10L9 10Q6 12 2 12V8H-2V12Q-6 12 -9 10Z" />
      <path fill="none" stroke="#a5bad6" strokeWidth="1.500" d="M-8 -4L-3 2M8 -4L3 2M-4 -3H4" />
    </Poi>
    <MapLabel x="382" y="915">新村运动场</MapLabel>
    <MapLabel x="138" y="900" textAnchor="end">广州市海珠区</MapLabel>
    <MapLabel x="77" y="935" textAnchor="end" $size={31}>人民政府</MapLabel>
    <MapLabel x="0" y="0" textAnchor="middle" $size={34} transform="translate(861 920) rotate(-18)">新滘东路</MapLabel>
    <MapLabel x="1046" y="1043" $size={38}>官洲</MapLabel>
    <MapLabel x="31" y="975" $size={29} $tone="#4a4d51">腾讯地图</MapLabel>

    <Pin x={194} y={582} tone="#08c873" text="起" />
    <Pin x={736} y={458} tone="#fe554c" text="终" />
  </MapCanvas>
);

/* ---------- page ---------- */

const tools = [
  { name: "全览", Icon: OverviewIcon },
  { name: "反馈", Icon: FeedbackIcon },
  { name: "设置", Icon: SettingsIcon },
  { name: "周边推荐", Icon: TreesIcon },
];

const actions = [
  { name: "路线分享", Icon: ShareIcon },
  { name: "添加行程", Icon: PushpinIcon },
  { name: "收藏", Icon: StarIcon },
];

const facts = ["共2站", "总步行1.1公里", "2元"];

export default function App() {
  return (
    <>
      <Global />
      <Screen>
        <Content>
          <Stage>
            <CityMap />
            <Fade />
            <StatusBar>
              <StatusGroup $gap={14}>
                <Clock>9:52</Clock>
                <AppBadge />
                <MoreDots />
              </StatusGroup>
              <StatusGroup $gap={10}>
                <NavArrow />
                <Cellular />
                <Cellular />
                <Wifi />
                <StatusGroup $gap={7}>
                  <Battery>52</Battery>
                  <BatteryNub />
                </StatusGroup>
                <LiveDot />
              </StatusGroup>
            </StatusBar>

            <Controls>
              <FloatButton $size={116} aria-label="返回">
                <BackArrow />
              </FloatButton>
              <SideColumn>
                <ToolPanel aria-label="地图工具">
                  {tools.map(({ name, Icon }) => (
                    <Tool key={name}>
                      <Icon />
                      {name}
                    </Tool>
                  ))}
                </ToolPanel>
                <FloatButton $size={112} aria-label="定位">
                  <LocateIcon />
                </FloatButton>
              </SideColumn>
            </Controls>

            <DragHandle />

            <Card>
              <CardHead>
                <Total>全程23分钟</Total>
                <Signal>
                  <Satellite />
                  定位信号弱
                </Signal>
              </CardHead>
              <RouteBar>
                <WalkSlot><Walker /></WalkSlot>
                <LineBar>8号线</LineBar>
                <WalkSlot><Walker /></WalkSlot>
              </RouteBar>
              <Facts>
                {facts.map((f) => (
                  <Fact key={f}>{f}</Fact>
                ))}
              </Facts>
              <Pager>
                {[1, 2, 3, 4, 5].map((n) => (
                  <PageDot key={n} $active={n === 1} aria-label={`方案${n}`} />
                ))}
              </Pager>
            </Card>
          </Stage>

          <Steps>
            <Step>
              <Gutter $top={47}>
                <StartRing />
              </Gutter>
              <StartBody>
                <PlaceName>润亭国际公寓</PlaceName>
                <Hint>至赤岗附近，可选择以下方式</Hint>
                <ModeSwitch>
                  <Mode $active>
                    <Walker tone="#1fb163" height={35} />
                    9分钟
                  </Mode>
                  <ModeDivider />
                  <Mode>
                    <Cyclist />
                    6分钟
                  </Mode>
                </ModeSwitch>
              </StartBody>
            </Step>

            <Step>
              <Gutter $center $gap={14}>
                <BeadPair><Bead $faint /><Bead /></BeadPair>
                <Walker />
                <BeadPair><Bead /><Bead $faint /></BeadPair>
              </Gutter>
              <WalkBody>
                步行 560米 9分钟
                <WalkLink href="#walk">步行导航</WalkLink>
              </WalkBody>
            </Step>

            <Step>
              <Gutter $top={48}>
                <StationDisc><TrainIcon /></StationDisc>
                <LineTrack />
              </Gutter>
              <StationBody>
                <StationHead>
                  <PlaceName>赤岗 地铁站</PlaceName>
                  <ExitTag>C1口</ExitTag>
                </StationHead>
                <Direction>
                  <LineTag>8号线</LineTag>
                  万胜围方向
                </Direction>
                <Timetable>
                  5分钟/班
                  <TimeDivider />
                  06:17-23:48
                </Timetable>
              </StationBody>
            </Step>
          </Steps>
        </Content>

        <Footer>
          <FooterRow>
            {actions.map(({ name, Icon }) => (
              <Action key={name}>
                <Icon />
                {name}
              </Action>
            ))}
            <StartButton>
              <GoArrow />
              <StartText>
                <StartMain>开始导航</StartMain>
                <StartSub>下车提醒</StartSub>
              </StartText>
            </StartButton>
          </FooterRow>
          <HomeBar />
        </Footer>
      </Screen>
    </>
  );
}
